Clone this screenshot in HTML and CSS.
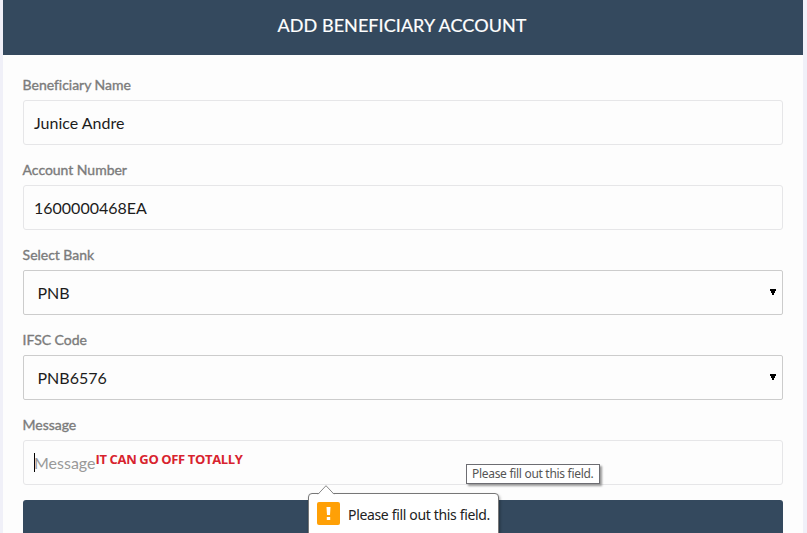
FILE: index.html
```html
<!DOCTYPE html>
<html lang="en">
<head>
<meta charset="utf-8">
<title>Add Beneficiary Account</title>
<link rel="stylesheet" href="styles.css">
</head>
<body>
<main class="card">
  <h1 class="header">ADD BENEFICIARY ACCOUNT</h1>
  <form class="form">
    <div class="group"><div class="label">Beneficiary Name</div><div class="field"><span>Junice Andre</span></div></div>
    <div class="group"><div class="label">Account Number</div><div class="field"><span>1600000468EA</span></div></div>
    <div class="group"><div class="label">Select Bank</div><div class="field select"><span>PNB</span><svg class="arrow" viewBox="0 0 6 6"><path d="M0 0H6V2H5V4H4V6H2V4H1V2H0Z"/></svg></div></div>
    <div class="group"><div class="label">IFSC Code</div><div class="field select"><span>PNB6576</span><svg class="arrow" viewBox="0 0 6 6"><path d="M0 0H6V2H5V4H4V6H2V4H1V2H0Z"/></svg></div></div>
    <div class="group"><div class="label">Message</div><div class="field message"><i class="caret"></i><span>Message</span><span class="note">IT CAN GO OFF TOTALLY</span></div></div>
    <div class="submit"></div>
  </form>
</main>
<div class="tooltip">Please fill out this field.</div>
<div class="bubble">
  <svg class="tip" viewBox="0 0 18 10"><path d="M0 9.5H1L9 .7L17 9.5H18V10H0Z" fill="#fff"/><path d="M1 9.2L9 .7L17 9.2" fill="none" stroke="#888" stroke-width="1"/></svg>
  <svg class="warn" viewBox="0 0 23 23"><rect width="23" height="23" rx="2" fill="#ffa006"/><path d="M9.5 5H13.5L13 13H10ZM9.8 15H13.2V18H9.8Z" fill="#fff"/></svg>
  <span class="bubble-text">Please fill out this field.</span>
</div>
</body>
</html>
```
FILE: styles.css
```css
* { box-sizing: border-box; }
body { margin: 0; height: 533px; overflow: hidden; position: relative; background: #f0f0f8; font-family: Lato, sans-serif; }
.card { width: 800px; height: 533px; margin-left: 3px; background: #fdfdfd; }
.header { height: 55px; margin: 0; padding: 0 2px 5px 0; display: flex; align-items: center; justify-content: center; background: #34495e; color: #fff; font-size: 18px; font-weight: 400; letter-spacing: .06px; -webkit-text-stroke: .2px #fff; }
.form { padding: 15px 20px 0; }
.group { height: 85px; }
.label { height: 30px; line-height: 30px; margin-left: -.4px; font-size: 14px; letter-spacing: -.03px; color: #7b7b7b; -webkit-text-stroke: .35px #7b7b7b; white-space: nowrap; }
.field { height: 45px; display: flex; align-items: center; padding: 0 10px; border: 1px solid #e6e6e8; border-radius: 3px; background: #fdfdfd; color: #1c1c1c; font-size: 16px; white-space: nowrap; }
.select { padding: 0 6px 0 13.5px; border-color: #ccc; border-radius: 2px; justify-content: space-between; }
.arrow { width: 6px; height: 6px; margin-top: -2px; }
.message { color: #999; }
.caret { width: 1px; height: 19px; margin-right: -1px; background: #000; }
.note { margin: -7px 0 0; color: #d8232e; font: bold 13px "Open Sans", sans-serif; letter-spacing: -.37px; }
.submit { height: 45px; margin-top: 5px; border-radius: 3px 3px 0 0; background: #34495e; }
.tooltip { position: absolute; left: 466px; top: 464px; width: 134px; height: 20px; border: 1px solid #6d6d72; background: #fff; box-shadow: 2px 2px 2px #999; padding-left: 5px; color: #555; font: 12px/18px "Noto Sans", sans-serif; letter-spacing: -.3px; white-space: nowrap; }
.bubble { position: absolute; left: 308px; top: 493px; width: 191px; height: 55px; padding: 8px 8px 0; display: flex; align-items: flex-start; gap: 8px; border: 1px solid #777; border-radius: 4px; background: #fff; box-shadow: 1px 2px 3px #0005; }
.tip { position: absolute; left: 8px; top: -9px; width: 18px; height: 10px; }
.warn { width: 23px; height: 23px; flex: none; }
.bubble-text { color: #222; font: 14px/26px "Noto Sans", sans-serif; letter-spacing: -.34px; white-space: nowrap; }
```
